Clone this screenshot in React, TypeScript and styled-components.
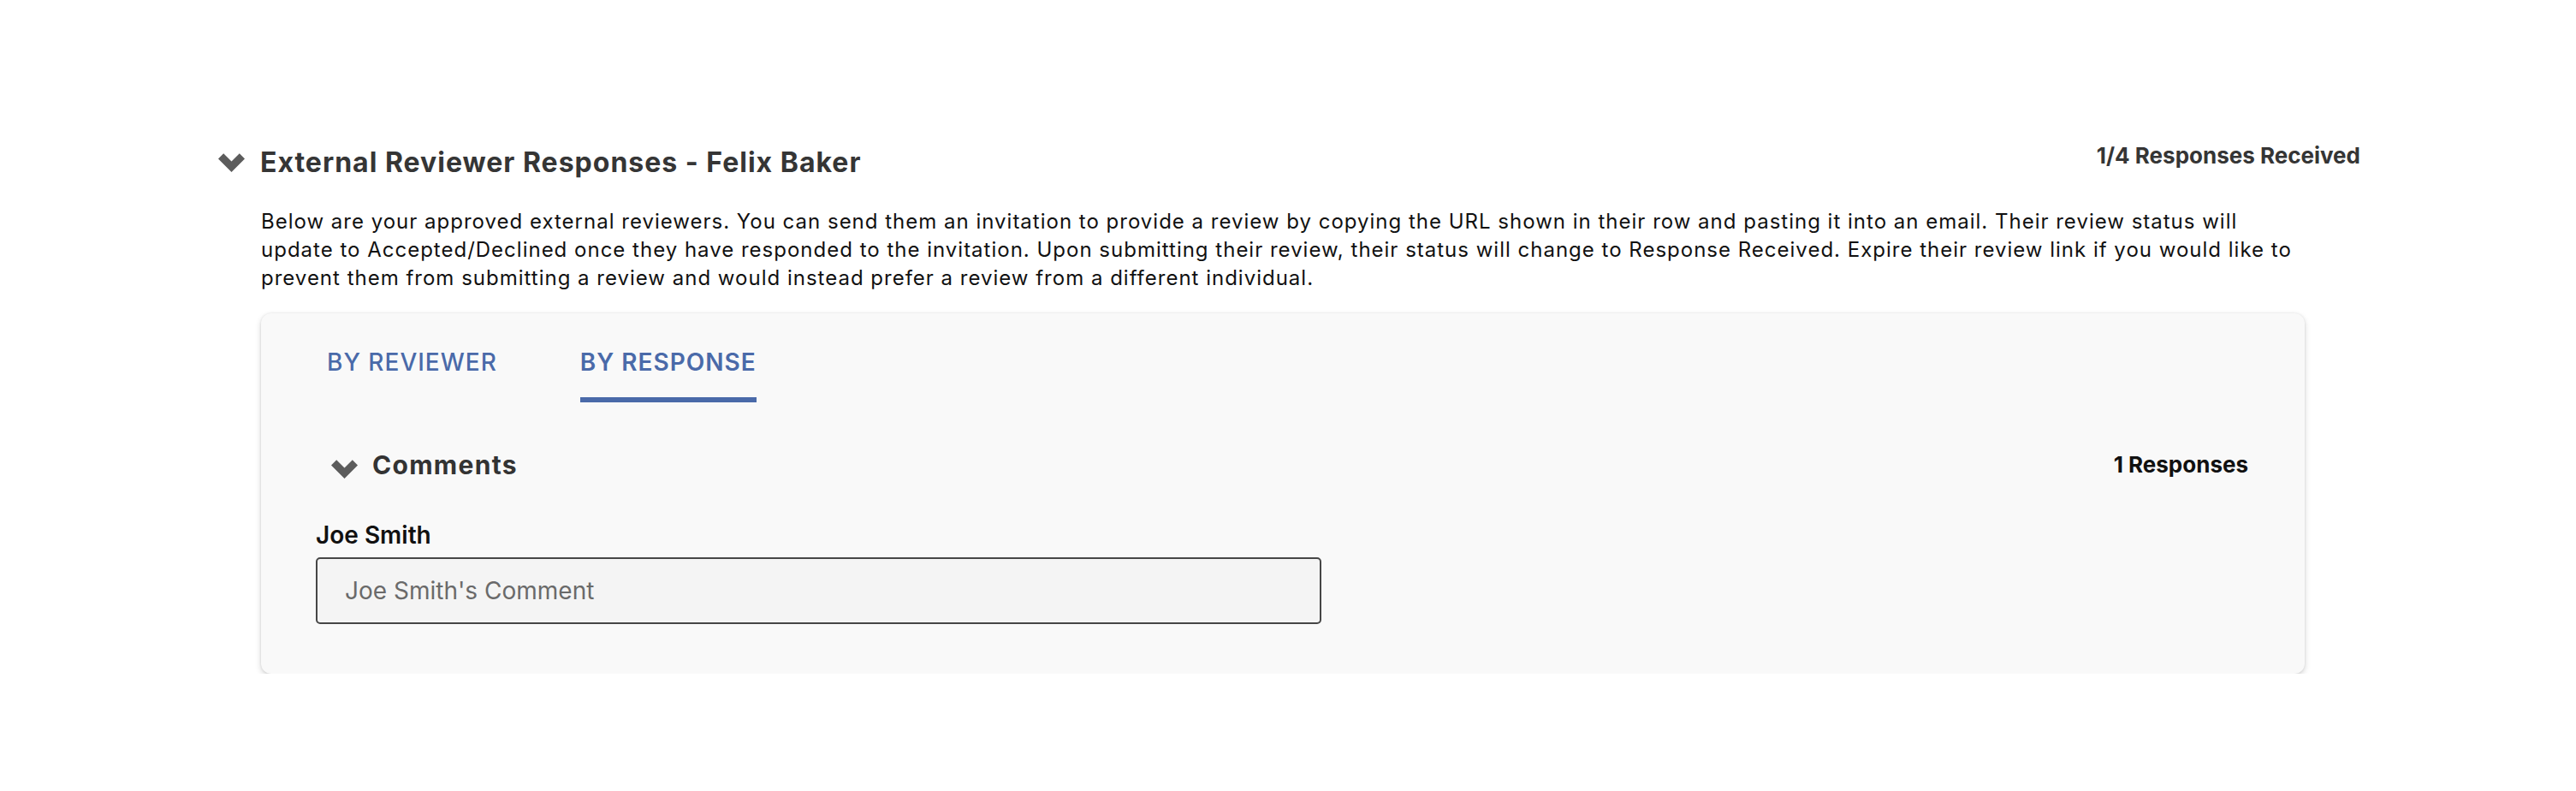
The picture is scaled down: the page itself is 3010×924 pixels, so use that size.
import React from "react";
import styled, { createGlobalStyle } from "styled-components";

const GlobalStyle = createGlobalStyle`
  html, body {
    margin: 0;
    padding: 0;
    background: #ffffff;
    font-family: Inter, "Noto Sans", "Liberation Sans", sans-serif;
  }
`;

const Page = styled.main`
  padding: 170px 252px 0 255px;
`;

const SectionHeader = styled.div`
  display: flex;
  justify-content: space-between;
  align-items: flex-start;
`;

const HeaderLeft = styled.div<{ $gap: number }>`
  display: flex;
  align-items: center;
  gap: ${(p) => p.$gap}px;
`;

const ChevronIcon = styled.svg<{ $offset?: number }>`
  flex: none;
  width: 31px;
  height: 22px;
  margin-top: ${(p) => p.$offset ?? 0}px;
`;

const Title = styled.h2`
  margin: 0;
  font-size: 32px;
  line-height: 40px;
  font-weight: 700;
  letter-spacing: 1px;
  color: #353535;
`;

const HeaderCount = styled.div`
  font-size: 26px;
  line-height: 24px;
  font-weight: 700;
  color: #353535;
`;

const Body = styled.div`
  margin-top: 32px;
  padding: 0 65px 0 50px;
`;

const Intro = styled.p`
  margin: 0 15px 0 0;
  font-size: 24px;
  line-height: 33px;
  letter-spacing: 1px;
  color: #111;
`;

const Card = styled.section`
  margin-top: 25px;
  background: #f9f9f9;
  border-radius: 12px;
  box-shadow: 0 3px 7px rgba(0, 0, 0, 0.17), 0 0 3px rgba(0, 0, 0, 0.09);
  padding: 39px 66px 58px 64px;
`;

const Tabs = styled.div`
  display: flex;
  gap: 97px;
  padding-left: 13px;
`;

const Tab = styled.button<{ $active?: boolean }>`
  appearance: none;
  background: none;
  border: none;
  padding: 0 0 23px;
  margin: 0;
  font-family: inherit;
  font-size: 28px;
  line-height: 36px;
  letter-spacing: 1px;
  font-weight: ${(p) => (p.$active ? 600 : 500)};
  color: #4a6aa9;
  border-bottom: 6px solid ${(p) => (p.$active ? "#4a6aa9" : "transparent")};
  cursor: pointer;
`;

const GroupHeader = styled.div`
  margin-top: 54px;
  display: flex;
  justify-content: space-between;
  align-items: center;
  padding-left: 18px;
`;

const GroupTitle = styled.h3`
  margin: 0;
  font-size: 30px;
  line-height: 38px;
  font-weight: 700;
  letter-spacing: 1.3px;
  color: #333;
`;

const GroupCount = styled.div`
  font-size: 26px;
  line-height: 32px;
  font-weight: 700;
  color: #111;
`;

const ReviewerName = styled.div`
  margin-top: 46px;
  font-size: 28px;
  line-height: 34px;
  font-weight: 600;
  color: #111;
`;

const CommentInput = styled.input`
  display: block;
  margin-top: 9px;
  box-sizing: border-box;
  width: 1175px;
  height: 78px;
  border: 2px solid #464646;
  border-radius: 5px;
  background: #f4f4f4;
  padding: 0 32px;
  font-family: inherit;
  font-size: 28px;
  color: #333;
  outline: none;

  &::placeholder {
    color: #6a6a6a;
  }
`;

const Chevron = ({ offset }: { offset?: number }) => (
  <ChevronIcon $offset={offset} viewBox="0 0 31 22" aria-hidden="true">
    <polygon
      points="0,6.5 6.2,0.3 15.5,9.6 24.8,0.3 31,6.5 15.5,22"
      fill="#5c5c5c"
    />
  </ChevronIcon>
);

export default function App() {
  return (
    <>
      <GlobalStyle />
      <Page>
        <SectionHeader>
          <HeaderLeft $gap={18}>
            <Chevron />
            <Title>External Reviewer Responses - Felix Baker</Title>
          </HeaderLeft>
          <HeaderCount>1/4 Responses Received</HeaderCount>
        </SectionHeader>
        <Body>
          <Intro>
            Below are your approved external reviewers. You can send them an
            invitation to provide a review by copying the URL shown in their
            row and pasting it into an email. Their review status will update
            to Accepted/Declined once they have responded to the invitation.
            Upon submitting their review, their status will change to Response
            Received. Expire their review link if you would like to prevent
            them from submitting a review and would instead prefer a review
            from a different individual.
          </Intro>
          <Card>
            <Tabs>
              <Tab>BY REVIEWER</Tab>
              <Tab $active>BY RESPONSE</Tab>
            </Tabs>
            <GroupHeader>
              <HeaderLeft $gap={17}>
                <Chevron offset={10} />
                <GroupTitle>Comments</GroupTitle>
              </HeaderLeft>
              <GroupCount>1 Responses</GroupCount>
            </GroupHeader>
            <ReviewerName>Joe Smith</ReviewerName>
            <CommentInput placeholder="Joe Smith's Comment" />
          </Card>
        </Body>
      </Page>
    </>
  );
}
